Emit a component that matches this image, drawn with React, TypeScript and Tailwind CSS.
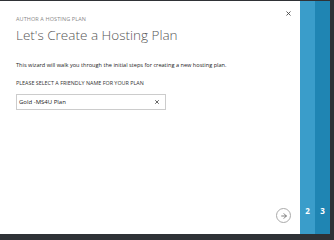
import { X, ArrowRight } from 'lucide-react';

const font = { fontFamily: '"Open Sans", "Liberation Sans", sans-serif' };

function StepColumn({ num, className }: { num: string; className: string }) {
  return (
    <div className={`flex w-[15px] flex-col items-center justify-end pb-[19px] ${className}`}>
      <span className="text-[8px] font-bold leading-none text-white">{num}</span>
    </div>
  );
}

export default function App() {
  return (
    <div
      className="flex h-[240px] w-[334px] flex-col bg-[#2f3236] pt-px pr-[4px] pb-[6px]"
      style={font}
    >
      <div className="flex flex-1">
        <div className="relative flex flex-1 flex-col bg-white pl-[16px] pt-[16px]">
          <button className="absolute right-[8px] top-[9px] text-[#444]">
            <X size={7} strokeWidth={3} />
          </button>
          <p className="text-[5.5px] uppercase leading-none tracking-[0.1px] text-[#888]">
            Author a hosting plan
          </p>
          <h1 className="mt-[6px] text-[13.5px] font-light leading-none text-[#555]">
            Let's Create a Hosting Plan
          </h1>
          <p className="mt-[21px] text-[5.6px] leading-none text-[#222]">
            This wizard will walk you through the initial steps for creating a new hosting plan.
          </p>
          <p className="mt-[12px] text-[5.4px] uppercase leading-none text-[#333]">
            Please select a friendly name for your plan
          </p>
          <div className="mt-[8px] flex h-[16px] w-[150px] items-center justify-between border border-[#ccc] pl-[2px] pr-[5px]">
            <span className="text-[6px] leading-none text-[#222]">Gold -MS4U Plan</span>
            <X size={6} strokeWidth={3} className="text-[#333]" />
          </div>
          <div className="mt-auto mb-[11px] mr-[9px] flex justify-end">
            <div className="flex h-[15px] w-[15px] items-center justify-center rounded-full border border-[#aaa] text-[#666]">
              <ArrowRight size={8} strokeWidth={2.5} />
            </div>
          </div>
        </div>
        <StepColumn num="2" className="bg-[#3a9dca]" />
        <StepColumn num="3" className="bg-[#1f85b3]" />
      </div>
    </div>
  );
}
